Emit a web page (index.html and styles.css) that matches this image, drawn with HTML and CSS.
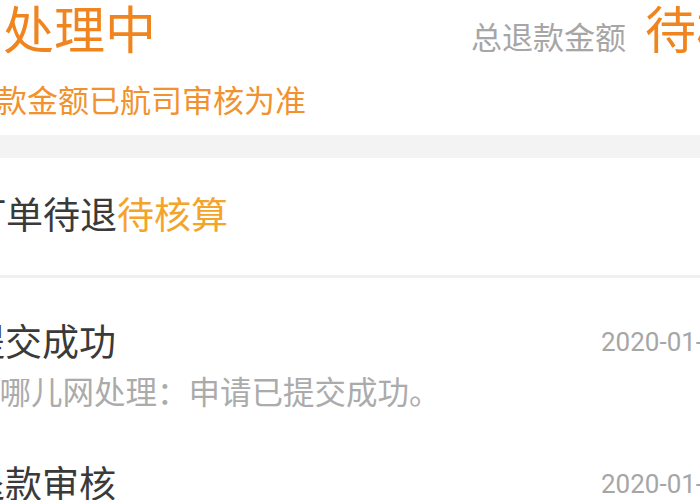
FILE: index.html
```html
<!DOCTYPE html>
<html lang="zh-CN">
<head>
<meta charset="utf-8">
<title>退款进度</title>
<link rel="stylesheet" href="styles.css">
</head>
<body>
<div class="page">
  <section class="header">
    <div class="header-top">
      <div class="status">处理中</div>
      <div class="total"><span class="total-label">总退款金额</span><span class="total-value">待核算</span></div>
    </div>
    <div class="note">退款金额已航司审核为准</div>
  </section>
  <div class="band"></div>
  <section class="summary">
    <div class="summary-text">订单待退<span class="summary-status">待核算</span></div>
  </section>
  <section class="timeline">
    <div class="item">
      <div class="item-head">
        <div class="item-title">提交成功</div>
        <div class="item-date">2020-01-15 10:21</div>
      </div>
      <div class="item-desc">去哪儿网处理：申请已提交成功。</div>
    </div>
    <div class="item">
      <div class="item-head">
        <div class="item-title">退款审核</div>
        <div class="item-date">2020-01-15 10:25</div>
      </div>
      <div class="item-desc">航司处理：退款审核中。</div>
    </div>
  </section>
</div>
</body>
</html>
```

FILE: styles.css
```css
html, body {
  margin: 0;
  padding: 0;
  background: #ffffff;
}

body {
  width: 700px;
  height: 500px;
  overflow: hidden;
  font-family: "Noto Sans CJK SC", "Noto Sans", sans-serif;
  font-weight: 400;
  color: #333333;
}

.page {
  width: 700px;
}

.header {
  box-sizing: border-box;
  height: 135px;
  padding-top: 2px;
}

.header-top {
  display: flex;
  align-items: baseline;
  justify-content: space-between;
  width: 700px;
}

.status {
  font-size: 51px;
  line-height: 1;
  color: #f0841e;
  margin-left: 3px;
}

.total {
  flex: none;
  width: 229px;
  white-space: nowrap;
  display: flex;
  align-items: baseline;
}

.total-label {
  font-size: 31px;
  line-height: 1;
  color: #a6a6a6;
}

.total-value {
  font-size: 51px;
  line-height: 1;
  color: #f0841e;
  margin-left: 19px;
}

.note {
  margin-top: 30px;
  margin-left: -35px;
  font-size: 31px;
  line-height: 1;
  color: #f2922e;
  white-space: nowrap;
}

.band {
  height: 23px;
  background: #f3f3f3;
}

.summary {
  box-sizing: border-box;
  height: 120px;
  padding-top: 37px;
  border-bottom: 3px solid #f0f0f0;
}

.summary-text {
  margin-left: -31px;
  font-size: 37px;
  line-height: 1;
  color: #3a3a3a;
  white-space: nowrap;
}

.summary-status {
  color: #f5a42a;
}

.timeline {
  display: flex;
  flex-direction: column;
}

.item {
  margin-left: -32px;
  padding-top: 44px;
  padding-bottom: 13px;
}

.item-head {
  display: grid;
  grid-template-columns: 633px auto;
  align-items: center;
}

.item-title {
  font-size: 37px;
  line-height: 1;
  color: #3a3a3a;
  white-space: nowrap;
}

.item-date {
  font-family: Roboto, "Noto Sans", sans-serif;
  font-weight: 400;
  font-size: 26px;
  line-height: 1;
  color: #a6a6a6;
  white-space: nowrap;
  padding-top: 3px;
}

.item-desc {
  margin-top: 16px;
  font-size: 31.5px;
  line-height: 1;
  color: #ababab;
  white-space: nowrap;
}
```
